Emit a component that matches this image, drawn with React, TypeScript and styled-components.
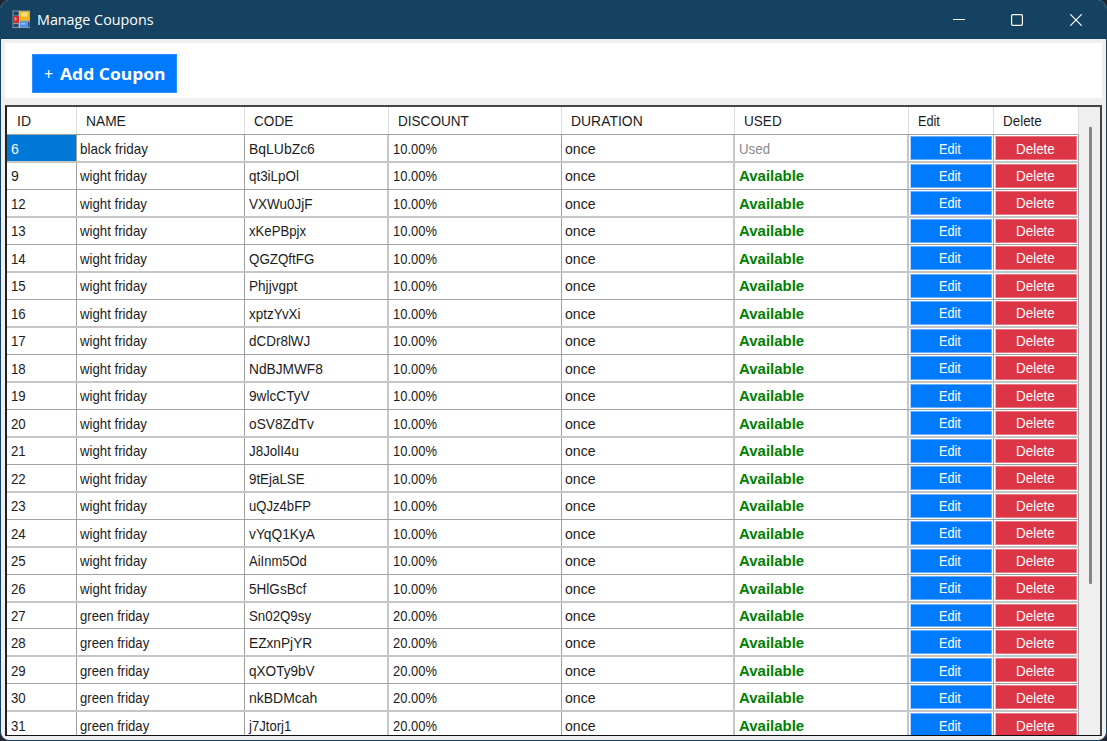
import React, { useLayoutEffect, useRef, useState } from "react";
import styled, { createGlobalStyle, css } from "styled-components";

const GlobalStyle = createGlobalStyle`
  *, *::before, *::after { box-sizing: border-box; }
  body { margin: 0; background: #23262e; overflow: hidden; }
`;

const COLUMNS = "70px 168px 144px 173px 173px 174px 85px 85px";
const ROW_PITCH = 27.476;

const Window = styled.div`
  display: flex;
  flex-direction: column;
  width: 1107px;
  height: 741px;
  background: #efefef;
  border: 1px solid #154261;
  border-top: 0;
  border-radius: 9px;
  overflow: hidden;
  font: 15px/18px "Liberation Sans", Arial, sans-serif;
  color: #1c1c1c;
`;

const TitleBar = styled.header`
  display: flex;
  align-items: center;
  flex: 0 0 39px;
  padding: 0 1px 0 11px;
  background: #154261;
  color: #fff;
`;

const Title = styled.div`
  flex: 1;
  margin: -2px 0 0 6px;
  font-family: "Open Sans", "Noto Sans", sans-serif;
  font-size: 14.7px;
`;

const CaptionButton = styled.button`
  display: grid;
  place-items: center;
  width: 58.5px;
  height: 39px;
  padding: 0;
  border: 0;
  background: none;
  color: #fff;
`;

const Toolbar = styled.div`
  display: flex;
  align-items: center;
  flex: 0 0 55px;
  margin: 4px 4px 0;
  padding: 0 27px 2px;
  background: #fff;
`;

const AddButton = styled.button`
  display: flex;
  align-items: center;
  width: 145px;
  height: 39px;
  margin-top: 9px;
  margin-bottom: 2px;
  padding: 2px 0 0 11px;
  border: 1px solid #2a8fff;
  background: #007bff;
  color: #fff;
  font: 700 16px/20px "Open Sans", "Noto Sans", sans-serif;
`;

const Plus = styled.span`
  width: 16px;
  text-align: left;
  font-weight: 500;
`;

const GridFrame = styled.main`
  display: flex;
  flex: 0 0 631px;
  margin: 7px 4px 0;
  border: 2px solid #454545;
  border-left-color: #222;
  border-right-color: #444;
  border-bottom: 1px solid #111;
  overflow: hidden;
`;

const Table = styled.div`
  flex: 0 0 1072px;
  background: #fff;
`;

const line = css<{ $soft?: boolean }>`
  ${(p) => (p.$soft ? "2px solid #c6c6c6" : "1px solid #a0a0a0")}
`;

const HeaderRow = styled.div`
  display: grid;
  grid-template-columns: ${COLUMNS};
  height: 28px;
  border-bottom: 1px solid #a0a0a0;
`;

const HeaderCell = styled.div`
  display: flex;
  align-items: center;
  padding: 1px 0 0 9px;
  border-right: 1px solid #dedede;

  &:first-child {
    padding-left: 10px;
  }
`;

const Cell = styled.div<{ $selected?: boolean; $indent?: number; $soft?: boolean }>`
  display: flex;
  align-items: center;
  min-width: 0;
  padding: 2px 0 0 ${(p) => p.$indent ?? 3}px;
  border-right: ${line};
  background: ${(p) => (p.$selected ? "#0078d7" : "#fff")};
  color: ${(p) => (p.$selected ? "#fff" : "inherit")};
`;

const Row = styled.div<{ $soft: boolean }>`
  display: grid;
  grid-template-columns: ${COLUMNS};
  height: ${(p) => (p.$soft ? 28 : ROW_PITCH * 2 - 28)}px;
  border-bottom: ${line};

  ${Cell} {
    padding-top: ${(p) => (p.$soft ? 2 : 1)}px;
  }
`;

const Status = styled.span<{ $used: boolean }>`
  display: flex;
  color: ${(p) => (p.$used ? "#8a8a8a" : "#008000")};
  font-weight: ${(p) => (p.$used ? 400 : 700)};
  font-size: ${(p) => (p.$used ? 15 : 14.5)}px;
`;

const ActionCell = styled.div`
  display: flex;
  padding: 1px 1px 1px 1px;
  border-right: 1px solid #a0a0a0;
`;

const ActionButton = styled.button<{ $danger?: boolean }>`
  display: flex;
  flex: 1;
  align-items: center;
  justify-content: center;
  padding: 1px 2px 0 0;
  border: 1px solid ${(p) => (p.$danger ? "#e87783" : "#66b0ff")};
  border-left-color: ${(p) => (p.$danger ? "#f0b4ba" : "#b5d8ff")};
  background: ${(p) => (p.$danger ? "#dc3545" : "#007bff")};
  color: #fff;
  font: inherit;
`;

const ScrollTrack = styled.div`
  flex: 1;
  padding: 20px 0 0 10px;
`;

const ScrollThumb = styled.div`
  width: 3px;
  height: 457px;
  border-radius: 1px;
  background: #858585;
`;

const FitBox = styled.span`
  display: inline-block;
  flex: none;
  white-space: pre;
  text-align: left;
`;

const FitInner = styled.span`
  display: inline-block;
  transform-origin: 0 50%;
`;

/* Condenses a label horizontally so that it takes up the given width. */
function Fit({ width, children }: { width: number; children: string }) {
  const ref = useRef<HTMLSpanElement>(null);
  const [scale, setScale] = useState(1);
  useLayoutEffect(() => {
    if (ref.current) setScale(width / ref.current.offsetWidth);
  }, [width, children]);
  return (
    <FitBox style={{ width }}>
      <FitInner ref={ref} style={{ transform: `scaleX(${scale})` }}>
        {children}
      </FitInner>
    </FitBox>
  );
}

const headers: [string, number][] = [
  ["ID", 14],
  ["NAME", 39.5],
  ["CODE", 39],
  ["DISCOUNT", 70.5],
  ["DURATION", 71.5],
  ["USED", 38],
  ["Edit", 22],
  ["Delete", 38.5],
];

const codes: [number, string, number][] = [
  [6, "BqLUbZc6", 66],
  [9, "qt3iLpOl", 50],
  [12, "VXWu0JjF", 64],
  [13, "xKePBpjx", 57],
  [14, "QGZQftFG", 65],
  [15, "Phjjvgpt", 48],
  [16, "xptzYvXi", 52],
  [17, "dCDr8lWJ", 61],
  [18, "NdBJMWF8", 74],
  [19, "9wlcCTyV", 61],
  [20, "oSV8ZdTv", 65],
  [21, "J8JolI4u", 50],
  [22, "9tEjaLSE", 56],
  [23, "uQJz4bFP", 62],
  [24, "vYqQ1KyA", 66],
  [25, "AiInm5Od", 58],
  [26, "5HlGsBcf", 57],
  [27, "Sn02Q9sy", 62],
  [28, "EZxnPjYR", 63],
  [29, "qXOTy9bV", 66],
  [30, "nkBDMcah", 68],
  [31, "j7Jtorj1", 42],
];

const coupons = codes.map(([id, code, codeWidth]) => ({
  id,
  code,
  codeWidth,
  name: id === 6 ? "black friday" : id < 27 ? "wight friday" : "green friday",
  discount: id < 27 ? "10.00%" : "20.00%",
  used: id === 6,
}));

function AppIcon() {
  return (
    <svg width="19" height="19" viewBox="0 0 19 19">
      <rect x="0.5" y="0.5" width="17.5" height="17.5" fill="#899aa7" />
      <rect x="1.5" y="1.5" width="5" height="4" fill="#1d4565" />
      <rect x="1" y="6" width="6" height="7" fill="#ce2c30" />
      <rect x="2.5" y="7.5" width="2" height="3" fill="#ef8b82" />
      <rect x="1.5" y="14" width="5" height="3" fill="#254b70" />
      <rect x="7" y="1" width="1" height="16.5" fill="#c3c6c8" />
      <rect x="8" y="1.5" width="9.5" height="9" fill="#f3b922" />
      <rect x="9.5" y="2.5" width="6" height="4" fill="#ffe07a" />
      <rect x="8" y="12" width="7" height="5" fill="#4c8eef" />
      <rect x="9" y="13" width="4.5" height="1.5" fill="#a1c9ff" />
      <rect x="16" y="12" width="1.5" height="5" fill="#254b70" />
    </svg>
  );
}

export default function App() {
  return (
    <>
      <GlobalStyle />
      <Window>
        <TitleBar>
          <AppIcon />
          <Title>
            <Fit width={117}>Manage Coupons</Fit>
          </Title>
          <CaptionButton aria-label="Minimize">
            <svg width="12" height="12"><path d="M0 5.5H12" stroke="currentColor" /></svg>
          </CaptionButton>
          <CaptionButton aria-label="Maximize">
            <svg width="12" height="12">
              <rect x="0.6" y="0.6" width="10.8" height="10.8" rx="1.2" fill="none" stroke="currentColor" strokeWidth="1.2" />
            </svg>
          </CaptionButton>
          <CaptionButton aria-label="Close">
            <svg width="12" height="12">
              <path d="M0.3 0.3L11.7 11.7M11.7 0.3L0.3 11.7" stroke="currentColor" strokeWidth="1.2" />
            </svg>
          </CaptionButton>
        </TitleBar>
        <Toolbar>
          <AddButton>
            <Plus>+</Plus>
            <Fit width={106}>Add Coupon</Fit>
          </AddButton>
        </Toolbar>
        <GridFrame>
          <Table>
            <HeaderRow>
              {headers.map(([label, width], i) => (
                <HeaderCell key={i}>
                  <Fit width={width}>{label}</Fit>
                </HeaderCell>
              ))}
            </HeaderRow>
            {coupons.map((c, i) => (
              <Row key={c.id} $soft={i % 2 === 0}>
                <Cell $selected={c.id === 6} $indent={4}>
                  <Fit width={c.id < 10 ? 7.5 : 15}>{String(c.id)}</Fit>
                </Cell>
                <Cell>
                  <Fit width={c.id < 27 ? (c.id === 6 ? 68 : 67) : 69}>{c.name}</Fit>
                </Cell>
                <Cell $indent={4} $soft>
                  <Fit width={c.codeWidth}>{c.code}</Fit>
                </Cell>
                <Cell $indent={4}>
                  <Fit width={44}>{c.discount}</Fit>
                </Cell>
                <Cell $soft>
                  <Fit width={31}>once</Fit>
                </Cell>
                <Cell $indent={4} $soft>
                  <Status $used={c.used}>
                    <Fit width={c.used ? 31 : 65}>{c.used ? "Used" : "Available"}</Fit>
                  </Status>
                </Cell>
                <ActionCell>
                  <ActionButton>
                    <Fit width={22}>Edit</Fit>
                  </ActionButton>
                </ActionCell>
                <ActionCell>
                  <ActionButton $danger>
                    <Fit width={38.5}>Delete</Fit>
                  </ActionButton>
                </ActionCell>
              </Row>
            ))}
          </Table>
          <ScrollTrack>
            <ScrollThumb />
          </ScrollTrack>
        </GridFrame>
      </Window>
    </>
  );
}
